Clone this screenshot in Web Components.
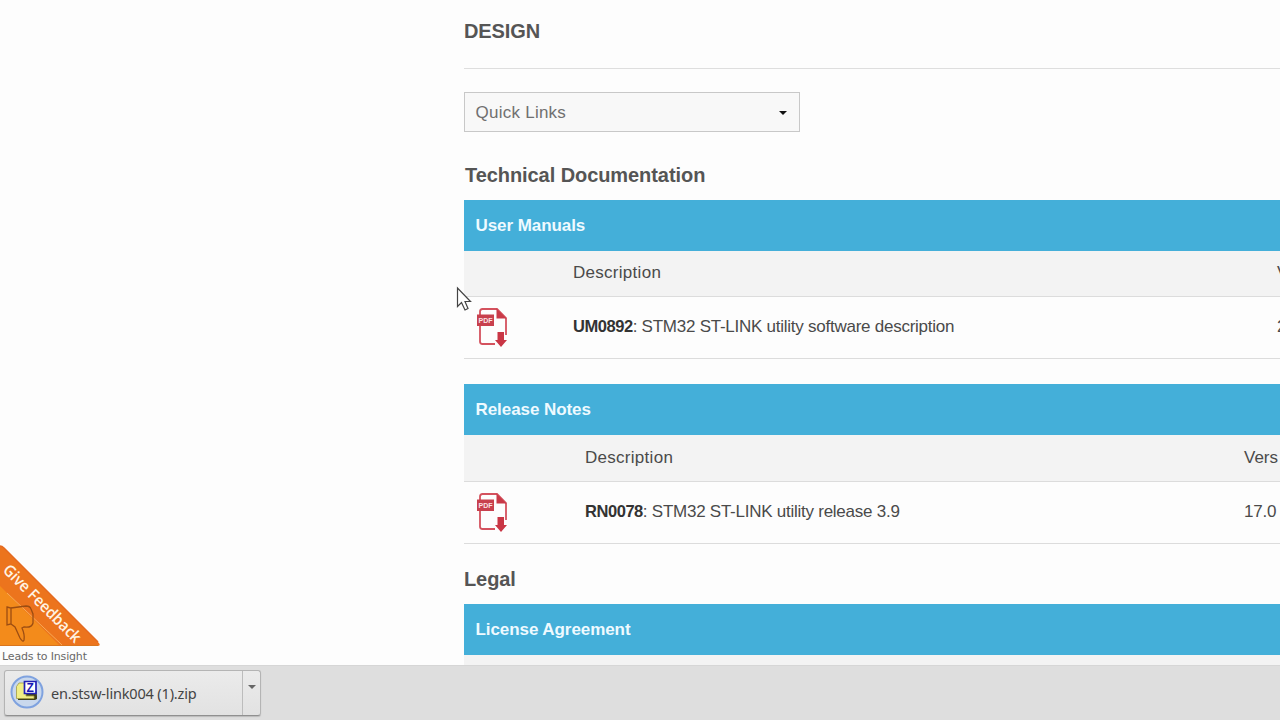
<!DOCTYPE html>
<html lang="en">
<head>
<meta charset="utf-8">
<title>Design</title>
<style>
  body {
    margin: 0;
    width: 1280px;
    height: 720px;
    overflow: hidden;
    background: #fdfdfd;
    font-family: "Liberation Sans", Arial, sans-serif;
    font-size: 17px;
    color: #4a4a4a;
  }
</style>
</head>
<body>
<design-page></design-page>

<script>
const define = (name, html) => {
  const template = document.createElement('template');
  template.innerHTML = html;
  customElements.define(name, class extends HTMLElement {
    constructor() {
      super();
      this.attachShadow({ mode: 'open' });
      this.shadowRoot.appendChild(template.content.cloneNode(true));
    }
  });
};

define('section-title', `
  <style>
    :host { display: block; height: 24px; line-height: 24px; font-size: 20px; font-weight: bold; color: #555; white-space: nowrap; letter-spacing: -0.1px; }
  </style>
  <slot></slot>
`);

define('quick-links', `
  <style>
    :host {
      display: flex;
      align-items: center;
      justify-content: space-between;
      box-sizing: border-box;
      width: 336px;
      height: 40px;
      padding: 2px 12px 0 10.5px;
      border: 1px solid #c8c8c8;
      background: #f8f8f8;
      color: #707070;
      letter-spacing: 0.25px;
    }
    .arrow { border: 4px solid transparent; border-top-color: #111; border-bottom: 0; }
  </style>
  <slot></slot>
  <span class="arrow"></span>
`);

define('pdf-icon', `
  <style>
    :host { display: block; width: 32px; height: 40px; }
    svg { display: block; }
    text { font: bold 8px "Liberation Sans", sans-serif; fill: #fbe3e5; }
  </style>
  <svg width="32" height="40" viewBox="0 0 32 40">
    <path d="M4 8V4.5Q4 2 6.500 2H21L30 11V28M4 19V34.500Q4 37 6.500 37H19" fill="none" stroke="#d4525e" stroke-width="1.800"/>
    <path d="M20.500 1.500V11.500H30.500Z" fill="#c93a48"/>
    <path d="M1 7.500H18V19H1Z" fill="#c8404d"/>
    <text x="2.500" y="16" textLength="14" lengthAdjust="spacingAndGlyphs">PDF</text>
    <path d="M21.500 25H28V33H31L25 40L19 33H21.500Z" fill="#c93645"/>
  </svg>
`);

// one table of documents: blue caption, column names and one file
define('doc-table', `
  <style>
    :host { display: block; flex: none; }
    .caption {
      display: flex;
      align-items: center;
      height: 51px;
      padding-left: 11.5px;
      background: #44afd9;
      color: #effaff;
      font-weight: bold;
      letter-spacing: -0.07px;
    }
    .row {
      display: grid;
      grid-template-columns: var(--first, 109px) var(--second, 704px) 1fr;
      align-items: center;
      box-sizing: border-box;
      border-bottom: 1px solid #dcdcdc;
      white-space: nowrap;
      overflow: hidden;
    }
    .head { height: var(--head, 46px); background: #f3f3f3; padding-bottom: var(--head-pad, 2px); }
    .file { height: 62px; padding-bottom: 1px; }
    :host([folded]) .file { display: none; }
    pdf-icon { margin-left: 12px; }
  </style>
  <div class="caption"><slot name="caption"></slot></div>
  <div class="row head">
    <span></span><slot name="col"></slot><slot name="col-version"></slot>
  </div>
  <div class="row file">
    <pdf-icon></pdf-icon><slot name="file"></slot><slot name="version"></slot>
  </div>
`);

define('feedback-corner', `
  <style>
    :host { position: absolute; left: 0; top: 545px; width: 102px; height: 120px; }
    svg { display: block; }
    .give { font: 600 16px "Open Sans", sans-serif; fill: #fff3e3; }
    .lead { font: 11px "DejaVu Sans", sans-serif; fill: #686868; }
  </style>
  <svg width="102" height="120" viewBox="0 0 102 120">
    <path d="M0 1Q2 1 4 3L98 97Q102 101 97 101H0Z" fill="#ec741d"/>
    <path d="M0 41L60 101H0Z" fill="#f38b1b"/>
    <path d="M0 1Q2 1 4 3L98 97" fill="none" stroke="#e56a20" stroke-width="1.500"/>
    <path d="M0 100.500H98" stroke="#d9751d" fill="none"/>
    <path d="M7 48L62 100" stroke="#f8ab55" fill="none"/>
    <path d="M7 62L11 63V79L7 80ZM11 63L26 61Q30 61 31 64L33 69V78Q32 83 24 82L22 83Q25 90 24 95Q23 98 20 93L15 82L11 79" fill="none" stroke="#9c4d12" stroke-width="1.300"/>
    <text class="give" transform="translate(2 26) rotate(45)" textLength="103" lengthAdjust="spacingAndGlyphs">Give Feedback</text>
    <text class="lead" x="2" y="115" textLength="85">Leads to Insight</text>
  </svg>
`);

define('mouse-pointer', `
  <style>
    :host { position: absolute; left: 456px; top: 286px; }
    svg { display: block; }
  </style>
  <svg width="17" height="26" viewBox="0 0 17 26">
    <path d="M1.500 2V20.500L5.500 16.500L9 24L12 22.500L9 15.500H14.500Z" fill="#fff" stroke="#444" stroke-width="1.200"/>
  </svg>
`);

define('download-item', `
  <style>
    :host {
      display: flex;
      box-sizing: border-box;
      width: 257px;
      height: 46px;
      border: 1px solid #b4b4b4;
      border-bottom-color: #909090;
      border-radius: 3px;
      background: linear-gradient(#ebebeb, #e2e2e2);
      box-shadow: 0 1px 1px #bbb;
      font: 14.5px "Noto Sans", sans-serif;
      letter-spacing: -0.17px;
      color: #444;
    }
    .name { flex: 1; display: flex; align-items: center; gap: 7px; padding-left: 5px; white-space: nowrap; }
    .name svg { margin-bottom: 2px; }
    .more { width: 18px; border-left: 1px solid #bcbcbc; display: flex; justify-content: center; padding-top: 14px; box-sizing: border-box; }
    .more i { width: 0; height: 0; border: 4px solid transparent; border-top-color: #666; border-bottom: 0; }
    .z { font: bold 12px "Liberation Sans", sans-serif; fill: #1717b4; }
  </style>
  <div class="name">
    <svg width="34" height="34" viewBox="0 0 34 34">
      <circle cx="17" cy="17" r="15.500" fill="#c9d8ed" stroke="#7fa2df" stroke-width="2"/>
      <path d="M8 13H26L27 21V24L25 25H8Z" fill="#3f4018"/>
      <path d="M6.500 11.500L9 8H14L16 10V21H24V23.500H6.500Z" fill="#f1ee85" stroke="#a39d42" stroke-width=".8"/>
      <path d="M14.500 6.500H26V18.500H14.500Z" fill="#fff" stroke="#2020b5" stroke-width="1.700"/>
      <text class="z" x="16.500" y="17">Z</text>
    </svg>
    <slot></slot>
  </div>
  <div class="more"><i></i></div>
`);

define('design-page', `
  <style>
    :host { display: flex; flex-direction: column; height: 720px; position: relative; }
    main { height: 665px; box-sizing: border-box; padding: 19px 0 0 464px; overflow: hidden; display: flex; flex-direction: column; }
    section-title { flex: none; }
    hr { flex: none; width: 100%; height: 1px; margin: 25px 0 23px; border: 0; background: #dedede; }
    quick-links { flex: none; margin-bottom: 31px; }
    doc-table { margin: 13px 0 25px; }
    doc-table + doc-table { margin-top: 0; }
    .tech { letter-spacing: -0.07px; padding-left: 1px; }
    .notes { --first: 121px; --second: 659px; --head: 47px; --head-pad: 1px; margin-bottom: 23px; }
    .col { letter-spacing: 0.28px; }
    .file { letter-spacing: -0.25px; }
    .file b { color: #333; font-size: 16.5px; letter-spacing: -0.45px; }
    footer { flex: 1; display: flex; padding: 5px 0 0 4px; background: #dedede; box-shadow: inset 0 1px #d6d6d6; }
  </style>
  <main>
    <section-title>DESIGN</section-title>
    <hr>
    <quick-links>Quick Links</quick-links>
    <section-title class="tech">Technical Documentation</section-title>
    <doc-table>
      <span slot="caption">User Manuals</span>
      <span slot="col" class="col">Description</span>
      <span slot="col-version">V</span>
      <span slot="file" class="file"><b>UM0892</b>: STM32 ST-LINK utility software description</span>
      <span slot="version">2</span>
    </doc-table>
    <doc-table class="notes">
      <span slot="caption">Release Notes</span>
      <span slot="col" class="col">Description</span>
      <span slot="col-version">Vers</span>
      <span slot="file" class="file"><b>RN0078</b>: STM32 ST-LINK utility release 3.9</span>
      <span slot="version" class="file">17.0</span>
    </doc-table>
    <section-title>Legal</section-title>
    <doc-table folded>
      <span slot="caption">License Agreement</span>
    </doc-table>
  </main>
  <footer>
    <download-item>en.stsw-link004 (1).zip</download-item>
  </footer>
  <feedback-corner></feedback-corner>
  <mouse-pointer></mouse-pointer>
`);
</script>
</body>
</html>
